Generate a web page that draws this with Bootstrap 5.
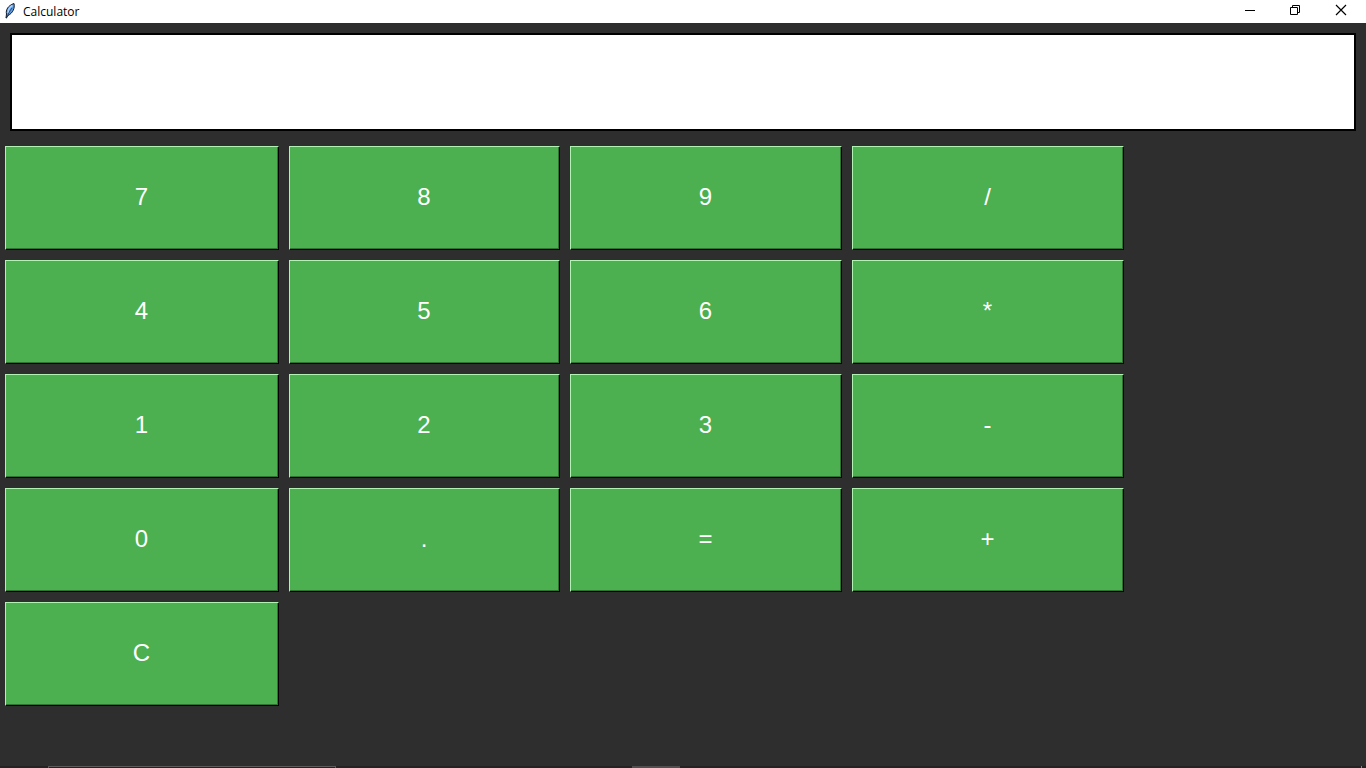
<!DOCTYPE html>
<html lang="en">
<head>
<meta charset="utf-8">
<meta name="viewport" content="width=device-width, initial-scale=1">
<title>Calculator</title>
<link href="https://cdn.jsdelivr.net/npm/bootstrap@5.3.0/dist/css/bootstrap.min.css" rel="stylesheet">
<style>
body { background: #2e2e2e; }
.titlebar { height: 23px; background: #fff; color: #000; }
.app-title { font: 12px/23px "Open Sans", "Noto Sans", sans-serif; }
.feather { width: 20px; height: 23px; margin-right: 3px; }
.win-controls { margin-right: 2px; }
.win-btn { width: 46px; height: 20px; line-height: 0; }
.win-btn:first-child { width: 45px; }
.win-btn svg { width: 12px; height: 12px; }
.readout { height: 98px; margin: 10px 10px 15px; border: 2px solid #000; background: #fff; color: #000; font: 32px "Liberation Sans", Arial, sans-serif; }
.keypad { display: grid; grid-template-columns: 274fr 271fr 272fr 272fr 232fr; grid-auto-rows: minmax(64px, 1fr); gap: 10px; padding: 0 0 60px 5px; }
.key { padding: 0 1px 2px 0; border: 1px solid #000; border-top-color: #aff2b2; border-left-color: #aff2b2; border-radius: 0; background: #4caf50; box-shadow: inset -1px -1px #2e7532; color: #fff; font: 24px/28px "Liberation Sans", Arial, sans-serif; }
.key:hover { background: #55b859; }
.key-first { grid-column: 1; }
.taskbar { height: 2px; background: #232323; }
.task-search { width: 288px; margin-left: 48px; border: 1px solid #5c5c5c; border-bottom: 0; }
.task-active { width: 48px; margin-left: 296px; background: #505050; }
.task-edge { width: 1px; margin-right: 4px; background: #888; }
</style>
</head>
<body class="min-vh-100 d-flex flex-column">
<header class="titlebar d-flex align-items-center">
  <svg class="feather" viewBox="0 0 20 23" aria-hidden="true">
    <path d="M6 18 6.500 14C5.500 10 8 5.500 14 3.500 15 8 13 13 8 15.500Z" fill="#5a9ae6" stroke="#111c2b" stroke-width="1"/>
    <path d="M8 13C8 9 10 7 12.500 5.500" fill="none" stroke="#a8d1ff" stroke-width="1.500"/>
    <path d="M6.500 18.500C8 14 10 10.500 12 8" fill="none" stroke="#142844" stroke-width=".7"/>
  </svg>
  <span class="app-title">Calculator</span>
  <div class="win-controls d-flex ms-auto align-self-start">
    <button type="button" class="win-btn btn border-0 rounded-0 p-0" aria-label="Minimize"><svg viewBox="0 0 12 12" stroke="#000" fill="none"><path d="M1 6.500h10"/></svg></button>
    <button type="button" class="win-btn btn border-0 rounded-0 p-0" aria-label="Restore"><svg viewBox="0 0 12 12" stroke="#000" fill="none"><path d="M1.500 3.500h7v7h-7zM3.500 3.500v-2h7v7h-2"/></svg></button>
    <button type="button" class="win-btn btn border-0 rounded-0 p-0" aria-label="Close"><svg viewBox="0 0 12 12" stroke="#000" stroke-width="1.2" fill="none"><path d="M1 1l10 10M11 1l-10 10"/></svg></button>
  </div>
</header>
<main class="flex-grow-1 d-flex flex-column">
  <input class="readout text-end px-2" type="text" aria-label="Display">
  <div class="keypad flex-grow-1">
    <button type="button" class="btn key key-first">7</button>
    <button type="button" class="btn key">8</button>
    <button type="button" class="btn key">9</button>
    <button type="button" class="btn key">/</button>
    <button type="button" class="btn key key-first">4</button>
    <button type="button" class="btn key">5</button>
    <button type="button" class="btn key">6</button>
    <button type="button" class="btn key">*</button>
    <button type="button" class="btn key key-first">1</button>
    <button type="button" class="btn key">2</button>
    <button type="button" class="btn key">3</button>
    <button type="button" class="btn key">-</button>
    <button type="button" class="btn key key-first">0</button>
    <button type="button" class="btn key">.</button>
    <button type="button" class="btn key">=</button>
    <button type="button" class="btn key">+</button>
    <button type="button" class="btn key key-first">C</button>
  </div>
</main>
<footer class="taskbar d-flex" aria-hidden="true">
  <div class="task-search"></div>
  <div class="task-active"></div>
  <div class="task-edge ms-auto"></div>
</footer>
<script src="https://cdn.jsdelivr.net/npm/bootstrap@5.3.0/dist/js/bootstrap.bundle.min.js"></script>
</body>
</html>
